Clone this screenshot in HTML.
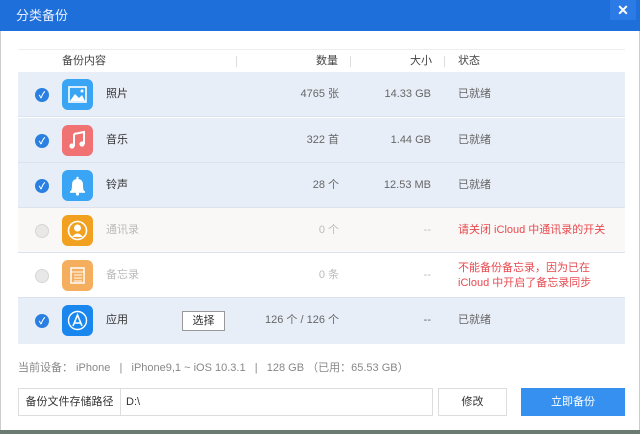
<!DOCTYPE html>
<html><head><meta charset="utf-8"><style>
*{margin:0;padding:0;box-sizing:border-box}
body{width:640px;height:434px;overflow:hidden;background:#fff;font-family:"Liberation Sans","Noto Sans CJK SC",sans-serif;font-size:11px;color:#333;position:relative}
.title{position:absolute;left:0;top:0;width:640px;height:31px;background:#1f6fdb;color:#e8f0ff;font-size:13px;line-height:31px;padding-left:16px}
.close{position:absolute;right:4px;top:0;width:26px;height:20px;background:#2b7ae6;color:#fff;font-size:14px;text-align:center;line-height:20px;font-weight:bold}
.frame{position:absolute;left:0;top:31px;width:640px;height:403px;border-left:1px solid #ccc;border-right:1px solid #ccc}
.hdr{position:absolute;left:18px;top:49px;width:607px;height:23px;background:#fff;border-top:1px solid #eee;line-height:23px;color:#444}
.hdr span{position:absolute}
.sep{position:absolute;top:6px;width:1px;height:11px;background:#ddd}
.row{position:absolute;left:18px;width:607px;height:45px;border-bottom:1px solid #dde3ee}
.row>*{position:absolute}
.chk{left:17px;top:16px;width:14px;height:14px;border-radius:50%;background:#2a7fe0;color:#fff;font-size:9px;text-align:center;line-height:14px;font-weight:bold}
.unchk{left:17px;top:16px;width:14px;height:14px;border-radius:50%;background:#e8e8e8;border:1px solid #d6d6d6}
.ic{left:44px;top:7px;width:31px;height:31px;border-radius:6px}
.nm{left:88px;top:0;line-height:45px}
.ct{right:286px;line-height:45px;color:#666;text-align:right}
.sz{right:194px;line-height:45px;color:#666}
.st{left:440px;line-height:45px;color:#666}
.dim{color:#bbb}
.red{color:#e8494f}
</style></head><body>
<div class="frame"></div>
<div class="title">分类备份<div class="close">✕</div></div>
<div class="hdr"><span style="left:44px">备份内容</span><div class="sep" style="left:218px"></div><span style="left:298px">数量</span><div class="sep" style="left:332px"></div><span style="left:392px">大小</span><div class="sep" style="left:426px"></div><span style="left:440px">状态</span></div>

<div class="row" style="top:72px;background:#e8eef8"><div class="chk">✓</div>
<div class="ic" style="background:#3ba5f5"><svg width="31" height="31"><rect x="7" y="8" width="17" height="15" fill="none" stroke="#fff" stroke-width="1.6"/><path d="M8 22 L13 15 L17 19 L20 16 L23 22Z" fill="#fff"/><circle cx="20" cy="12" r="1.5" fill="#fff"/></svg></div>
<div class="nm">照片</div><div class="ct">4765 张</div><div class="sz">14.33 GB</div><div class="st">已就绪</div></div>

<div class="row" style="top:118px;background:#e8eef8"><div class="chk">✓</div>
<div class="ic" style="background:#f07272"><svg width="31" height="31"><path d="M12 9 L22 7 V19" fill="none" stroke="#fff" stroke-width="2"/><path d="M12 9 V21" stroke="#fff" stroke-width="2"/><circle cx="10" cy="21" r="2.6" fill="#fff"/><circle cx="20" cy="19" r="2.6" fill="#fff"/></svg></div>
<div class="nm">音乐</div><div class="ct">322 首</div><div class="sz">1.44 GB</div><div class="st">已就绪</div></div>

<div class="row" style="top:163px;background:#e8eef8"><div class="chk">✓</div>
<div class="ic" style="background:#3ba5f5"><svg width="31" height="31"><path d="M9 21 Q10 19 10 15 Q10 9 15.5 9 Q21 9 21 15 Q21 19 22 21Z" fill="#fff"/><rect x="8" y="21" width="15" height="1.8" fill="#fff"/><circle cx="15.5" cy="24" r="1.6" fill="#fff"/><circle cx="15.5" cy="8" r="1.2" fill="#fff"/></svg></div>
<div class="nm">铃声</div><div class="ct">28 个</div><div class="sz">12.53 MB</div><div class="st">已就绪</div></div>

<div class="row" style="top:208px;background:#faf8f6"><div class="unchk"></div>
<div class="ic" style="background:#f2a020"><svg width="31" height="31"><circle cx="15.5" cy="15.5" r="9" fill="none" stroke="#fff" stroke-width="1.6"/><circle cx="15.5" cy="13" r="3.5" fill="#fff"/><path d="M10 22 Q15.5 15 21 22Z" fill="#fff"/></svg></div>
<div class="nm dim">通讯录</div><div class="ct dim">0 个</div><div class="sz dim">--</div><div class="st red">请关闭 iCloud 中通讯录的开关</div></div>

<div class="row" style="top:253px;background:#fff"><div class="unchk"></div>
<div class="ic" style="background:#f5ad5e"><svg width="31" height="31"><rect x="9" y="8" width="13" height="15" fill="none" stroke="#fff" stroke-width="1.5"/><path d="M9 12H22M12 15H20M12 18H20M12 21H20" stroke="#fff" stroke-width="1"/></svg></div>
<div class="nm dim">备忘录</div><div class="ct dim">0 条</div><div class="sz dim">--</div><div class="st red" style="line-height:15px;top:8px">不能备份备忘录，因为已在<br>iCloud 中开启了备忘录同步</div></div>

<div class="row" style="top:298px;background:#e8eef8;height:46px;border:none"><div class="chk">✓</div>
<div class="ic" style="background:#1a87ee"><svg width="31" height="31"><circle cx="15.5" cy="15.5" r="9" fill="none" stroke="#fff" stroke-width="1.4"/><path d="M11 21 L15.5 10 L20 21M12 18H19" fill="none" stroke="#fff" stroke-width="1.6"/></svg></div>
<div class="nm">应用</div>
<div style="left:164px;top:13px;width:43px;height:20px;border:1px solid #999;background:#fff;text-align:center;line-height:18px">选择</div>
<div class="ct">126 个 / 126 个</div><div class="sz">--</div><div class="st">已就绪</div></div>

<div style="position:absolute;left:18px;top:359px;color:#888;font-size:11px">当前设备： iPhone &nbsp; | &nbsp; iPhone9,1 ~ iOS 10.3.1 &nbsp; | &nbsp; 128 GB （已用：65.53 GB）</div>

<div style="position:absolute;left:18px;top:388px;width:103px;height:28px;border:1px solid #ddd;text-align:center;line-height:26px;color:#333">备份文件存储路径</div>
<div style="position:absolute;left:120px;top:388px;width:313px;height:28px;border:1px solid #ddd;line-height:26px;padding-left:5px">D:\</div>
<div style="position:absolute;left:438px;top:388px;width:69px;height:28px;border:1px solid #ddd;text-align:center;line-height:26px">修改</div>
<div style="position:absolute;left:521px;top:388px;width:104px;height:28px;background:#3590f0;color:#fff;text-align:center;line-height:28px">立即备份</div>
<div style="position:absolute;left:0;top:430px;width:640px;height:4px;background:#6a7a70"></div>
</body></html>
